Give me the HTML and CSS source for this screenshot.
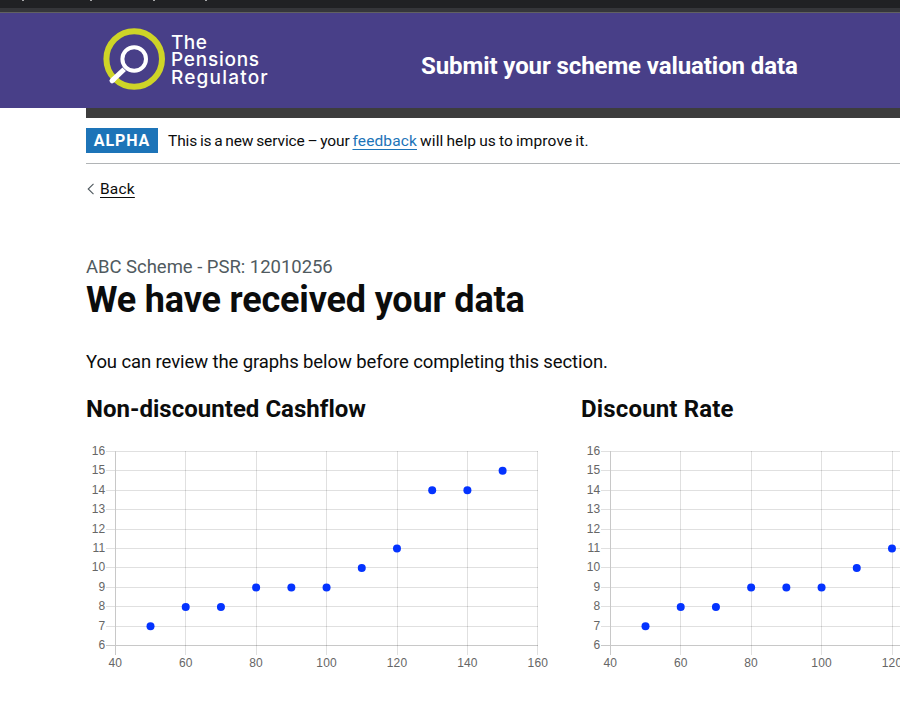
FILE: index.html
```html
<!DOCTYPE html>
<html lang="en">
<head>
<meta charset="utf-8">
<title>Submit your scheme valuation data</title>
<link rel="stylesheet" href="styles.css">
</head>
<body>
<div class="browser-edge"><i></i><i></i><i></i><i></i></div>
<header class="header">
  <div class="brand">
    <svg class="brand-mark" width="64" height="64" viewBox="0 0 64 64" fill="none">
      <circle cx="32.2" cy="32" r="27.8" stroke="#ced427" stroke-width="6"/>
      <circle cx="32.2" cy="32" r="11.8" stroke="#fff" stroke-width="4"/>
      <path d="M22.2 42.2 10.4 53.4" stroke="#fff" stroke-width="5"/>
      <path d="M11 53 10 53.8" stroke="#fff" stroke-width="5" stroke-linecap="round"/>
    </svg>
    <div class="brand-name"><span class="b1">The</span><span class="b2">Pensions</span><span class="b3">Regulator</span></div>
  </div>
  <div class="service"><span>Submit your scheme valuation data</span></div>
</header>
<main class="page">
  <div class="bar"></div>
  <div class="phase">
    <strong class="tag"><span>ALPHA</span></strong>
    <p class="phase-text"><span>This is a new service – your </span><a href="#">feedback</a><span> will help us to improve it.</span></p>
  </div>
  <nav class="back">
    <svg width="7" height="12" viewBox="0 0 7 12" fill="none"><path d="M6.5.8 1.2 6l5.3 5.2" stroke="#505a5f" stroke-width="1.1"/></svg>
    <a href="#">Back</a>
  </nav>
  <div class="caption"><span>ABC Scheme - PSR: 12010256</span></div>
  <h1><span>We have received your data</span></h1>
  <p class="intro"><span>You can review the graphs below before completing this section.</span></p>
  <div class="charts">
    <section><h2><span class="cash">Non-discounted Cashflow</span></h2><svg class="chart" width="465" height="240"></svg></section>
    <section><h2><span class="rate">Discount Rate</span></h2><svg class="chart" width="465" height="240"></svg></section>
  </div>
</main>
<script src="charts.js"></script>
</body>
</html>
```
FILE: styles.css
```css
* { box-sizing: border-box; }
body { margin: 0; height: 704px; overflow: hidden; background: #fff; color: #0b0c0c; font-family: Roboto, "Liberation Sans", sans-serif; }
h1, h2, p { margin: 0; white-space: nowrap; }
.browser-edge { height: 13px; background: linear-gradient(#202124 8px, #35363a 8px 12px, #616161 12px); display: flex; padding-left: 22px; gap: 66px; }
.browser-edge i { width: 2px; height: 1px; background: #a5a6a8; }
.browser-edge i:nth-child(2) { margin-right: -5px; }
.browser-edge i:nth-child(3) { margin-right: -16px; }
.header { height: 95px; background: #483f88; color: #fff; display: flex; padding-left: 102px; }
.brand { display: flex; width: 319px; padding-top: 14px; }
.brand-name { font: 500 19px/17.5px Inter, sans-serif; padding: 6.5px 0 0 5px; display: flex; flex-direction: column; align-items: flex-start; }
.b1 { letter-spacing: .4px; }
.b2 { letter-spacing: .75px; }
.b3 { letter-spacing: 1.2px; }
.service { font-size: 24px; font-weight: 700; letter-spacing: -.09px; line-height: 30px; padding-top: 38px; white-space: nowrap; }
.page { width: 960px; margin-left: 86px; }
.bar { height: 10px; background: #3d3d3d; }
.phase { display: flex; height: 46px; padding-top: 10px; border-bottom: 1px solid #b1b4b6; }
.tag { width: 72px; height: 25px; background: #1d74b8; color: #fff; font-size: 16px; line-height: 25px; text-align: center; letter-spacing: .9px; }
.phase-text { font-size: 15.5px; letter-spacing: .13px; word-spacing: -1px; line-height: 26px; padding-left: 10px; white-space: pre; }
.phase-text span:first-child { letter-spacing: -.1px; }
.phase-text a { color: #1d74b8; text-underline-offset: 3px; text-decoration-thickness: 1px; }
.back { display: flex; align-items: center; gap: 6px; margin-top: 15px; height: 20px; font-size: 15.5px; letter-spacing: .2px; padding-left: 1px; }
.back a { color: #0b0c0c; text-underline-offset: 3px; text-decoration-thickness: 1px; }
.caption { margin-top: 56px; font-size: 18.5px; letter-spacing: -.03px; line-height: 25px; color: #505a5f; }
h1 { font-size: 36px; letter-spacing: -.17px; line-height: 40px; }
.intro { margin-top: 30px; font-size: 18.5px; letter-spacing: -.1px; line-height: 25px; }
.charts { display: flex; gap: 30px; margin-top: 19px; }
h2 { font-size: 24px; line-height: 30px; }
.cash { letter-spacing: .02px; }
.rate { letter-spacing: .16px; }
.charts section { width: 465px; flex: none; }
.chart { display: block; margin-top: 14px; font: 12px "Liberation Sans", Arial, sans-serif; letter-spacing: .15px; fill: #666; }
```
FILE: charts.js
```js
const NS = 'http://www.w3.org/2000/svg';
const points = [[50, 7], [60, 8], [70, 8], [80, 9], [90, 9], [100, 9], [110, 10], [120, 11], [130, 14], [140, 14], [150, 15]];
const x = v => 29.3 + (v - 40) * 3.521;
const y = v => 207.5 - (v - 6) * 19.45;

function add(svg, tag, attrs, text) {
  const el = document.createElementNS(NS, tag);
  for (const k in attrs) el.setAttribute(k, attrs[k]);
  if (text !== undefined) el.textContent = text;
  svg.append(el);
}

document.querySelectorAll('.chart').forEach(svg => {
  for (let v = 6; v <= 16; v++) {
    const py = Math.floor(y(v) + 0.2);
    add(svg, 'rect', { x: 20, y: py, width: 432, height: 1, fill: v === 6 ? '#c8c8c8' : 'rgba(0,0,0,.12)' });
    add(svg, 'text', { x: 19.3, y: py + 4, 'text-anchor': 'end' }, v);
  }
  for (let v = 40; v <= 160; v += 20) {
    const px = Math.floor(x(v) + 0.1);
    add(svg, 'rect', { x: px, y: 13, width: 1, height: 204, fill: v === 40 ? '#c8c8c8' : 'rgba(0,0,0,.12)' });
    add(svg, 'text', { x: x(v), y: 229, 'text-anchor': 'middle' }, v);
  }
  points.forEach(p => add(svg, 'circle', { cx: x(p[0]), cy: y(p[1]) + 0.3, r: 4, fill: '#0433ff' }));
});
```
